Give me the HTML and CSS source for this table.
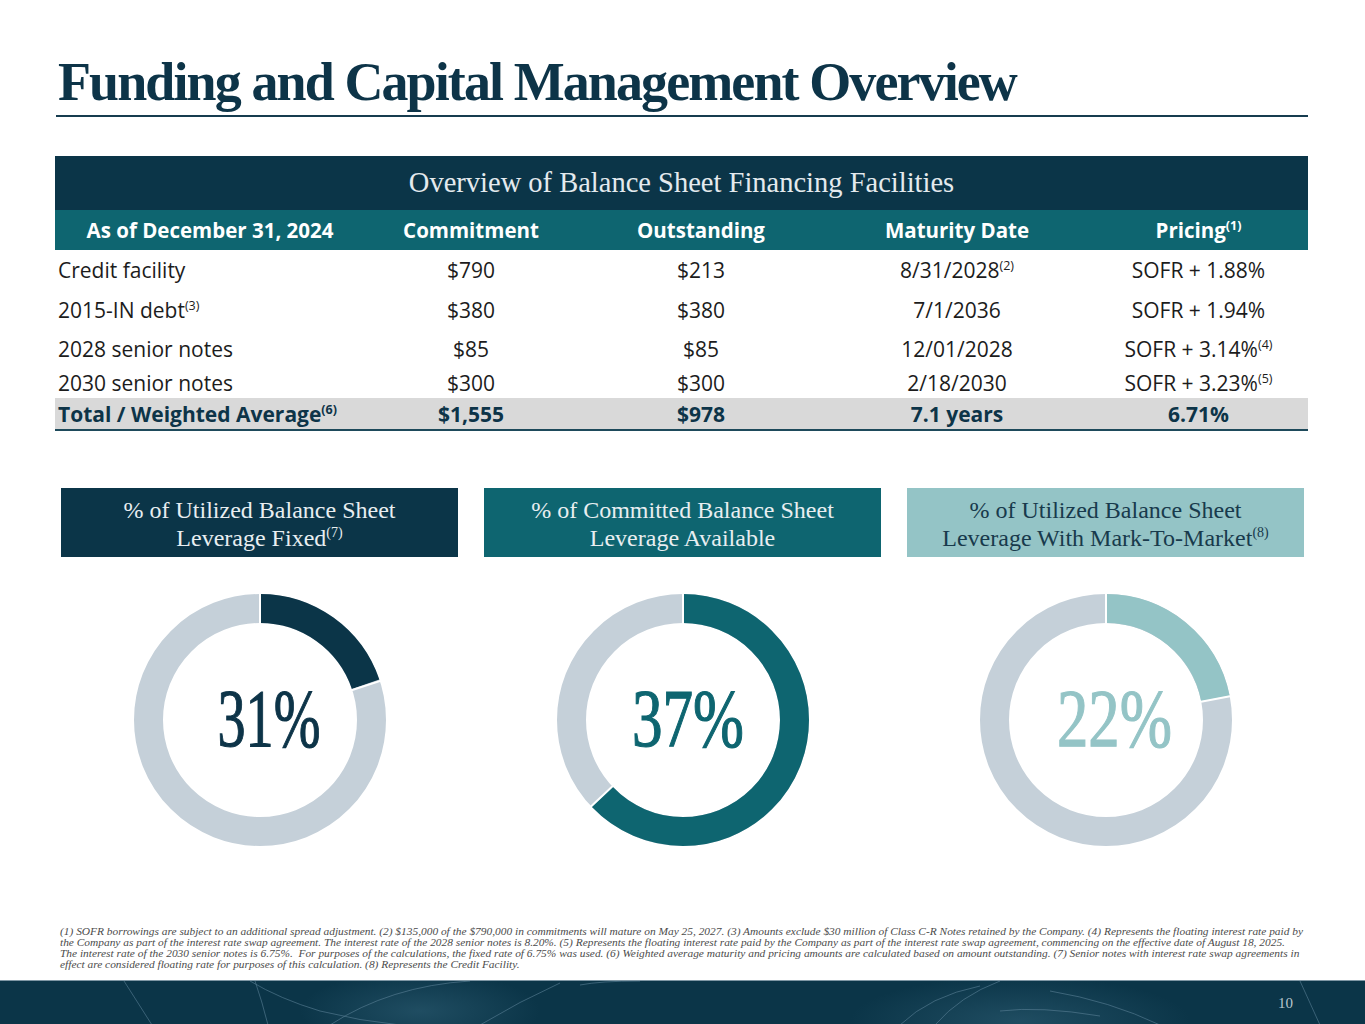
FILE: index.html
```html
<!DOCTYPE html>
<html lang="en">
<head>
<meta charset="utf-8">
<title>Funding and Capital Management Overview</title>
<link rel="stylesheet" href="styles.css">
</head>
<body>
<div class="slide">
  <header class="title-wrap">
    <h1 class="title">Funding and Capital Management Overview</h1>
  </header>

  <section class="facilities">
    <div class="fac-title">Overview of Balance Sheet Financing Facilities</div>
    <table class="fac-table">
      <colgroup>
        <col class="c1"><col class="c2"><col class="c3"><col class="c4"><col class="c5">
      </colgroup>
      <thead>
        <tr>
          <th>As of December 31, 2024</th>
          <th>Commitment</th>
          <th>Outstanding</th>
          <th>Maturity Date</th>
          <th>Pricing<span class="sup">(1)</span></th>
        </tr>
      </thead>
      <tbody>
        <tr class="r1">
          <td class="name">Credit facility</td>
          <td>$790</td>
          <td>$213</td>
          <td>8/31/2028<span class="sup">(2)</span></td>
          <td>SOFR + 1.88%</td>
        </tr>
        <tr class="r2">
          <td class="name">2015-IN debt<span class="sup">(3)</span></td>
          <td>$380</td>
          <td>$380</td>
          <td>7/1/2036</td>
          <td>SOFR + 1.94%</td>
        </tr>
        <tr class="r3">
          <td class="name">2028 senior notes</td>
          <td>$85</td>
          <td>$85</td>
          <td>12/01/2028</td>
          <td>SOFR + 3.14%<span class="sup">(4)</span></td>
        </tr>
        <tr class="r4">
          <td class="name">2030 senior notes</td>
          <td>$300</td>
          <td>$300</td>
          <td>2/18/2030</td>
          <td>SOFR + 3.23%<span class="sup">(5)</span></td>
        </tr>
        <tr class="total">
          <td class="name">Total / Weighted Average<span class="sup">(6)</span></td>
          <td>$1,555</td>
          <td>$978</td>
          <td>7.1 years</td>
          <td>6.71%</td>
        </tr>
      </tbody>
    </table>
  </section>

  <section class="metrics">
    <div class="metric">
      <div class="metric-label navy">% of Utilized Balance Sheet<br>Leverage Fixed<span class="sup-s">(7)</span></div>
      <svg class="donut" width="252" height="252" viewBox="0 0 252 252">
        <circle class="ring-bg" cx="126" cy="126" r="111.5" />
        <circle class="ring-fg navy-stroke" cx="126" cy="126" r="111.5" pathLength="100" stroke-dasharray="19.8 100" transform="rotate(-90 126 126)" />
        <line class="sep" x1="126" y1="0" x2="126" y2="31" />
        <line class="sep" x1="246.5" y1="86.9" x2="217.5" y2="96.3" />
        <text class="pct navy-fill" x="135" y="152" textLength="103" lengthAdjust="spacingAndGlyphs">31%</text>
      </svg>
    </div>
    <div class="metric">
      <div class="metric-label teal">% of Committed Balance Sheet<br>Leverage Available</div>
      <svg class="donut" width="252" height="252" viewBox="0 0 252 252">
        <circle class="ring-bg" cx="126" cy="126" r="111.5" />
        <circle class="ring-fg teal-stroke" cx="126" cy="126" r="111.5" pathLength="100" stroke-dasharray="62.9 100" transform="rotate(-90 126 126)" />
        <line class="sep" x1="126" y1="0" x2="126" y2="31" />
        <line class="sep" x1="33.7" y1="212.8" x2="55.8" y2="191.9" />
        <text class="pct teal-fill" x="131" y="152" textLength="112" lengthAdjust="spacingAndGlyphs">37%</text>
      </svg>
    </div>
    <div class="metric">
      <div class="metric-label light">% of Utilized Balance Sheet<br>Leverage With Mark-To-Market<span class="sup-s">(8)</span></div>
      <svg class="donut" width="252" height="252" viewBox="0 0 252 252">
        <circle class="ring-bg" cx="126" cy="126" r="111.5" />
        <circle class="ring-fg light-stroke" cx="126" cy="126" r="111.5" pathLength="100" stroke-dasharray="21.9 100" transform="rotate(-90 126 126)" />
        <line class="sep" x1="126" y1="0" x2="126" y2="31" />
        <line class="sep" x1="250" y1="102.2" x2="221" y2="107.8" />
        <text class="pct light-fill" x="134.5" y="152" textLength="115" lengthAdjust="spacingAndGlyphs">22%</text>
      </svg>
    </div>
  </section>

  <p class="notes">(1) SOFR borrowings are subject to an additional spread adjustment. (2) $135,000 of the $790,000 in commitments will mature on May 25, 2027. (3) Amounts exclude $30 million of Class C-R Notes retained by the Company. (4) Represents the floating interest rate paid by<br>the Company as part of the interest rate swap agreement. The interest rate of the 2028 senior notes is 8.20%. (5) Represents the floating interest rate paid by the Company as part of the interest rate swap agreement, commencing on the effective date of August 18, 2025.<br>The interest rate of the 2030 senior notes is 6.75%.&nbsp; For purposes of the calculations, the fixed rate of 6.75% was used. (6) Weighted average maturity and pricing amounts are calculated based on amount outstanding. (7) Senior notes with interest rate swap agreements in<br>effect are considered floating rate for purposes of this calculation. (8) Represents the Credit Facility.</p>

  <footer class="footer">
    <svg class="footer-art" width="1365" height="44" viewBox="0 0 1365 44" preserveAspectRatio="none">
      <defs>
        <radialGradient id="glow" cx="0.5" cy="0.5" r="0.5">
          <stop offset="0" stop-color="#2d5d73" stop-opacity="0.6"/>
          <stop offset="1" stop-color="#2d5d73" stop-opacity="0"/>
        </radialGradient>
      </defs>
      <ellipse cx="420" cy="30" rx="120" ry="40" fill="url(#glow)"/>
      <ellipse cx="1020" cy="40" rx="170" ry="45" fill="url(#glow)"/>
      <path class="arc" d="M124 0 Q138 22 152 44"/>
      <path class="arc" d="M250 0 Q280 18 320 30 Q360 40 400 44"/>
      <path class="arc" d="M255 0 Q262 20 268 44"/>
      <path class="arc" d="M560 2 Q520 20 480 44"/>
      <path class="arc" d="M580 4 Q600 0 640 0"/>
      <path class="arc" d="M330 44 Q390 5 470 0"/>
      <path class="arc" d="M900 44 Q930 15 980 5"/>
      <path class="arc" d="M935 44 Q960 15 1000 0"/>
      <path class="arc" d="M1050 10 Q1110 20 1160 44"/>
      <path class="arc" d="M1000 30 Q1040 25 1100 35"/>
      <path class="arc" d="M1300 0 Q1310 22 1320 44"/>
    </svg>
    <span class="page-num">10</span>
  </footer>
</div>
</body>
</html>
```

FILE: styles.css
```css
* { box-sizing: border-box; }

html, body {
  margin: 0;
  padding: 0;
  background: #ffffff;
}

.slide {
  width: 1365px;
  height: 1024px;
  display: flex;
  flex-direction: column;
  overflow: hidden;
  background: #ffffff;
}

/* Title */
.title-wrap {
  margin: 0 57px 0 56px;
  padding-top: 55px;
  border-bottom: 2px solid #163c4f;
}

.title {
  margin: 0;
  padding: 0 0 6px 2px;
  font-family: "Liberation Serif", "Times New Roman", serif;
  font-weight: bold;
  font-size: 54px;
  line-height: 54px;
  letter-spacing: -1.9px;
  color: #0d3448;
  white-space: nowrap;
}

/* Facilities table */
.facilities {
  margin: 39px 57px 0 55px;
}

.fac-title {
  height: 54px;
  background: #0b3548;
  color: #e4eaee;
  font-family: "Liberation Serif", "Times New Roman", serif;
  font-size: 28.5px;
  line-height: 54px;
  text-align: center;
}

.fac-table {
  width: 1253px;
  border-collapse: collapse;
  table-layout: fixed;
  font-family: "Open Sans", Lato, sans-serif;
  font-size: 21px;
  color: #1c1c1c;
}

.c1 { width: 310px; }
.c2 { width: 212px; }
.c3 { width: 248px; }
.c4 { width: 264px; }
.c5 { width: 219px; }

.fac-table th {
  height: 40px;
  padding: 0;
  background: #0e6570;
  color: #ffffff;
  font-weight: bold;
  font-size: 20.5px;
  text-align: center;
  white-space: nowrap;
}

.fac-table td {
  padding: 0;
  text-align: center;
  white-space: nowrap;
}

.fac-table td.name {
  text-align: left;
  padding-left: 3px;
}

.r1 td { height: 40px; }
.r2 td { height: 39px; }
.r3 td { height: 39px; }
.r4 td { height: 30px; }

.total td {
  height: 32px;
  background: #d9d9d9;
  color: #0d3448;
  font-weight: bold;
  border-bottom: 2px solid #1e4a5b;
}

.sup {
  font-size: 12.5px;
  vertical-align: 8px;
  line-height: 0;
  font-weight: normal;
}

th .sup { font-weight: bold; }
.total .sup { font-weight: bold; }

/* Metrics */
.metrics {
  margin-top: 57px;
  padding-left: 61px;
  display: grid;
  grid-template-columns: 397px 397px 397px;
  column-gap: 26px;
}

.metric {
  display: flex;
  flex-direction: column;
  align-items: center;
}

.metric-label {
  width: 100%;
  height: 69px;
  padding-top: 8px;
  font-family: "Liberation Serif", "Times New Roman", serif;
  font-size: 24px;
  line-height: 28px;
  text-align: center;
  color: #e8eef1;
}

.metric-label.navy { background: #0b3548; }
.metric-label.teal { background: #0e6570; }
.metric-label.light { background: #94c4c6; color: #183a4c; }

.sup-s {
  font-size: 14px;
  vertical-align: 9px;
  line-height: 0;
}

.donut {
  display: block;
  margin-top: 37px;
}

.ring-bg {
  fill: none;
  stroke: #c5d0d9;
  stroke-width: 29;
}

.ring-fg {
  fill: none;
  stroke-width: 29;
}

.navy-stroke { stroke: #0b3548; }
.teal-stroke { stroke: #0e6570; }
.light-stroke { stroke: #94c4c6; }

.sep {
  stroke: #ffffff;
  stroke-width: 2;
}

.pct {
  font-family: "Liberation Serif", "Times New Roman", serif;
  font-size: 83px;
  text-anchor: middle;
  stroke-width: 1.2px;
}

.navy-fill { fill: #0d3448; stroke: #0d3448; }
.teal-fill { fill: #0e6570; stroke: #0e6570; }
.light-fill { fill: #94c4c6; stroke: #94c4c6; }

/* Notes */
.notes {
  margin: 80px 0 0 0;
  padding-left: 60px;
  font-family: "Liberation Serif", "Times New Roman", serif;
  font-style: italic;
  font-size: 11.4px;
  line-height: 11px;
  color: #4b4b4b;
  white-space: nowrap;
}

/* Footer */
.footer {
  margin-top: auto;
  height: 44px;
  position: relative;
  background: #0b3548;
  border-top: 1px solid #7f97a5;
}

.footer-art {
  display: block;
}

.arc {
  fill: none;
  stroke: #5a8096;
  stroke-opacity: 0.6;
  stroke-width: 1;
}

.page-num {
  position: absolute;
  right: 72px;
  top: 14px;
  font-family: "Liberation Serif", "Times New Roman", serif;
  font-size: 15px;
  color: #b9c6ce;
}
```
